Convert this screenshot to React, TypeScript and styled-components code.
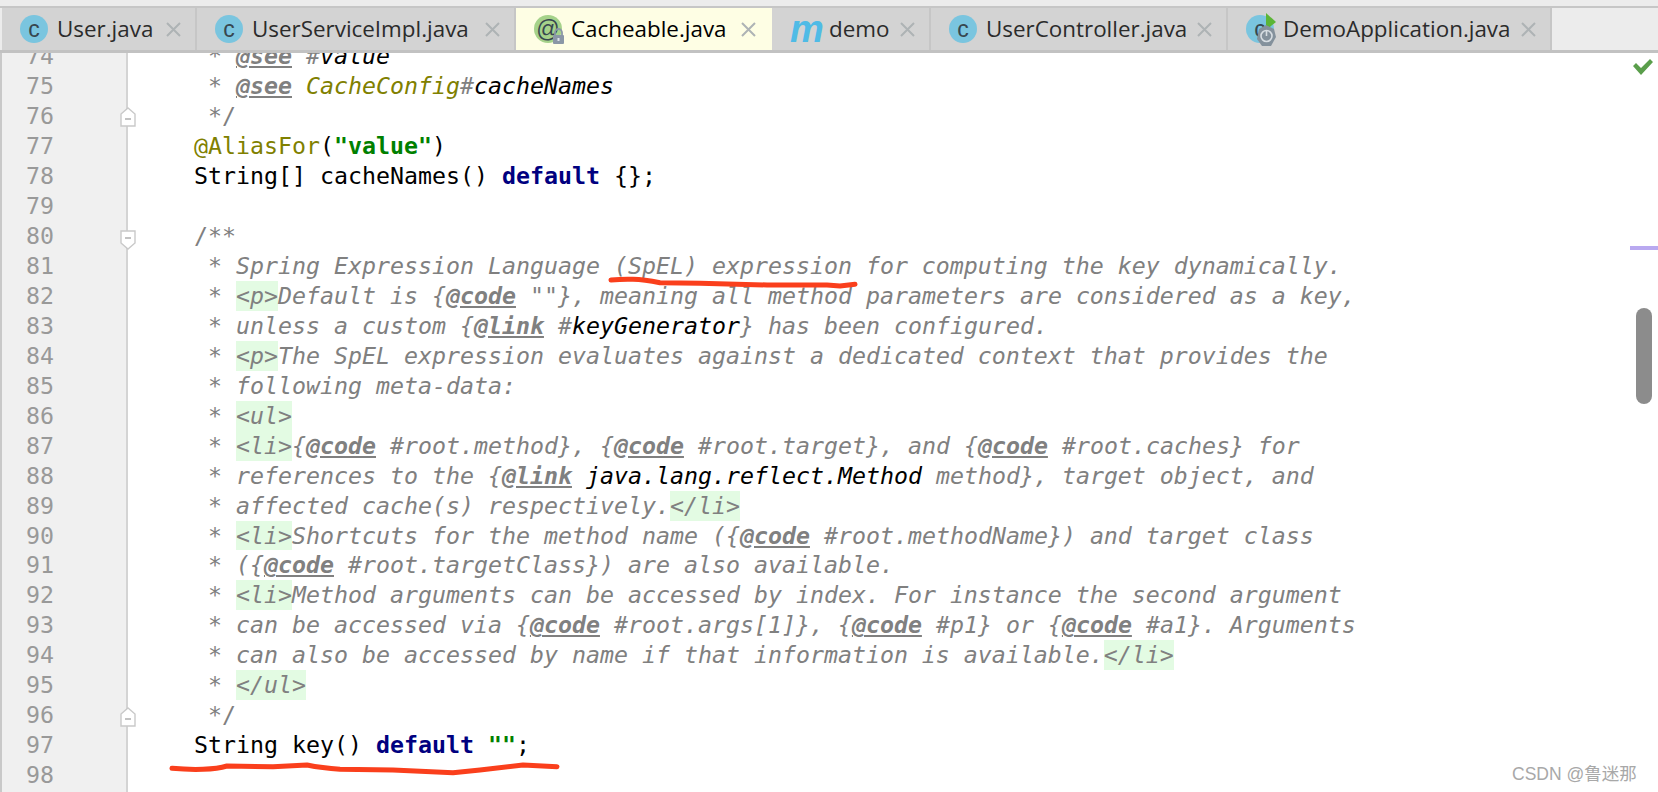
import React from "react";
import styled, { createGlobalStyle } from "styled-components";

const Global = createGlobalStyle`
  html, body { margin: 0; padding: 0; background: #fff; }
  #root { width: 1658px; height: 792px; overflow: hidden; }
`;

const Page = styled.div`
  position: relative;
  width: 1658px;
  height: 792px;
  overflow: hidden;
  display: flex;
  flex-direction: column;
  background: #fff;
`;
const TopStrip = styled.div`
  height: 6px;
  background: #ececec;
  border-bottom: 2px solid #c6c6c6;
  flex: none;
`;
const TabBar = styled.div`
  display: flex;
  height: 42px;
  padding-left: 2px;
  background: #ececec;
  border-bottom: 3px solid #c2c2c2;
  flex: none;
`;
const Tab = styled.div<{ $w: number; $active?: boolean }>`
  width: ${(p) => p.$w}px;
  box-sizing: border-box;
  display: flex;
  align-items: center;
  padding-left: 18px;
  background: ${(p) => (p.$active ? "#fefee4" : "#d3d3d3")};
  border-right: 2px solid ${(p) => (p.$active ? "#fefee4" : "#c6c6c6")};
  font-family: "Open Sans", "Liberation Sans", sans-serif;
  font-size: 22.4px;
  color: ${(p) => (p.$active ? "#000" : "#2b2b2b")};
  flex: none;
`;
const TabName = styled.span`
  margin-left: 9px;
  margin-bottom: 2px;
  white-space: nowrap;
`;
const CloseMark = styled.svg`
  margin-left: auto;
  margin-right: 14px;
  width: 15px;
  height: 15px;
  flex: none;
`;
const IconWrap = styled.span`
  position: relative;
  width: 28px;
  height: 28px;
  flex: none;
  display: block;
`;
const IconDisc = styled.span<{ $bg: string }>`
  display: flex;
  align-items: center;
  justify-content: center;
  width: 28px;
  height: 28px;
  border-radius: 50%;
  background: ${(p) => p.$bg};
  color: #37474f;
  font-family: "Liberation Sans", sans-serif;
  font-size: 23px;
  line-height: 1;
`;
const Badge = styled.svg`
  position: absolute;
  left: 0;
  top: 0;
  width: 32px;
  height: 32px;
  overflow: visible;
`;
const MavenMark = styled.span`
  font-family: "Liberation Sans", sans-serif;
  font-style: italic;
  font-weight: 700;
  font-size: 38px;
  line-height: 28px;
  color: #4fbbe6;
  width: 30px;
  flex: none;
`;

const Editor = styled.div`
  position: relative;
  flex: 1;
  display: flex;
  overflow: hidden;
  min-height: 0;
`;
const Gutter = styled.div`
  position: relative;
  width: 128px;
  box-sizing: border-box;
  flex: none;
  background: #f0f0f0;
  border-left: 2px solid #c9c9c9;
  border-right: 2px solid #d4d4d4;
  padding-left: 24px;
`;
const Nums = styled.div`
  margin-top: -12px;
  color: #999;
`;
const Code = styled.div`
  flex: 1;
  margin-top: -12px;
  padding-left: 10px;
  color: #000;
`;
const mono = `
  font-family: "DejaVu Sans Mono", "Liberation Mono", monospace;
  font-size: 23.25px;
  line-height: 29.97px;
  height: 29.97px;
  white-space: pre;
`;
const NumRow = styled.div`${mono}`;
const Line = styled.div`${mono}`;
const Doc = styled.span`
  color: #808080;
  font-style: italic;
`;
const DocPlain = styled.span`
  color: #808080;
`;
const DocTag = styled.span`
  color: #808080;
  font-weight: 700;
  font-style: italic;
  text-decoration: underline;
`;
const Html = styled.span`
  color: #808080;
  font-style: italic;
  background: #e3fbe3;
  display: inline-block;
  height: 29.97px;
`;
const Ref = styled.span`
  color: #000;
  font-style: italic;
`;
const Olive = styled.span`
  color: #808000;
`;
const OliveItalic = styled(Olive)`
  font-style: italic;
`;
const Kw = styled.span`
  color: #000080;
  font-weight: 700;
`;
const Str = styled.span`
  color: #008000;
  font-weight: 700;
`;
const FoldBox = styled.svg<{ $top: number }>`
  position: absolute;
  left: 118px;
  top: ${(p) => p.$top}px;
  width: 16px;
  height: 20px;
`;
const Check = styled.svg`
  position: absolute;
  right: 4px;
  top: 5px;
  width: 22px;
  height: 18px;
`;
const ErrorStripe = styled.div`
  position: absolute;
  right: 0;
  top: 193px;
  width: 28px;
  height: 4px;
  background: #b9a9f0;
`;
const ScrollThumb = styled.div`
  position: absolute;
  right: 6px;
  top: 255px;
  width: 16px;
  height: 96px;
  border-radius: 8px;
  background: #8c8c8c;
`;
const Ink = styled.svg<{ $l: number; $t: number; $w: number; $h: number }>`
  position: absolute;
  left: ${(p) => p.$l}px;
  top: ${(p) => p.$t}px;
  width: ${(p) => p.$w}px;
  height: ${(p) => p.$h}px;
  overflow: visible;
`;
const Watermark = styled.div`
  position: absolute;
  left: 1512px;
  top: 762px;
  font-family: "Liberation Sans", "Noto Sans CJK SC", sans-serif;
  font-size: 17.5px;
  line-height: 24px;
  color: #a8a8a8;
  white-space: nowrap;
`;

const Close = () => (
  <CloseMark viewBox="0 0 15 15">
    <path d="M1 1 L14 14 M14 1 L1 14" stroke="#aeb3b5" strokeWidth="2" fill="none" />
  </CloseMark>
);

const ClassIcon = () => (
  <IconWrap>
    <IconDisc $bg="#7ac5df">c</IconDisc>
  </IconWrap>
);
const AnnoIcon = () => (
  <IconWrap>
    <IconDisc $bg="#a5d28a">@</IconDisc>
    <Badge viewBox="0 0 32 32">
      <path d="M21 20 v-2.5 a3.5 3.5 0 0 1 7 0 V20" stroke="#8a97a6" strokeWidth="1.8" fill="none" />
      <rect x="19" y="20" width="11" height="9" rx="1" fill="#8a97a6" />
      <rect x="23.5" y="23" width="2" height="3" fill="#dfe4ea" />
    </Badge>
  </IconWrap>
);
const BootIcon = () => (
  <IconWrap>
    <IconDisc $bg="#7ac5df">c</IconDisc>
    <Badge viewBox="0 0 32 32">
      <path d="M20 -2 L30 7 L20 15 Z" fill="#5bb536" />
      <path d="M20 10 L28 14 L30 22 L25 31 L16 31 L11 24 L13 14 Z" fill="#84919c" />
      <circle cx="20.5" cy="21" r="5.5" fill="none" stroke="#d7dde2" strokeWidth="1.6" />
      <path d="M20.5 15 V21" stroke="#d7dde2" strokeWidth="1.6" />
    </Badge>
  </IconWrap>
);

const T = () => <DocPlain>{"     * "}</DocPlain>;

const lines: React.ReactNode[] = [
  <><T /><DocTag>@see</DocTag><Doc> #</Doc><Ref>value</Ref></>,
  <><T /><DocTag>@see</DocTag><Doc> </Doc><OliveItalic>CacheConfig</OliveItalic><Doc>#</Doc><Ref>cacheNames</Ref></>,
  <DocPlain>{"     */"}</DocPlain>,
  <>{"    "}<Olive>@AliasFor</Olive>(<Str>"value"</Str>)</>,
  <>{"    String[] cacheNames() "}<Kw>default</Kw>{" {};"}</>,
  <></>,
  <DocPlain>{"    /**"}</DocPlain>,
  <><T /><Doc>Spring Expression Language (SpEL) expression for computing the key dynamically.</Doc></>,
  <><T /><Html>{"<p>"}</Html><Doc>{"Default is {"}</Doc><DocTag>@code</DocTag><Doc>{' ""}, meaning all method parameters are considered as a key,'}</Doc></>,
  <><T /><Doc>{"unless a custom {"}</Doc><DocTag>@link</DocTag><Doc> #</Doc><Ref>keyGenerator</Ref><Doc>{"} has been configured."}</Doc></>,
  <><T /><Html>{"<p>"}</Html><Doc>The SpEL expression evaluates against a dedicated context that provides the</Doc></>,
  <><T /><Doc>following meta-data:</Doc></>,
  <><T /><Html>{"<ul>"}</Html></>,
  <><T /><Html>{"<li>"}</Html><Doc>{"{"}</Doc><DocTag>@code</DocTag><Doc>{" #root.method}, {"}</Doc><DocTag>@code</DocTag><Doc>{" #root.target}, and {"}</Doc><DocTag>@code</DocTag><Doc>{" #root.caches} for"}</Doc></>,
  <><T /><Doc>{"references to the {"}</Doc><DocTag>@link</DocTag><Doc> </Doc><Ref>java.lang.reflect.Method</Ref><Doc>{" method}, target object, and"}</Doc></>,
  <><T /><Doc>affected cache(s) respectively.</Doc><Html>{"</li>"}</Html></>,
  <><T /><Html>{"<li>"}</Html><Doc>{"Shortcuts for the method name ({"}</Doc><DocTag>@code</DocTag><Doc>{" #root.methodName}) and target class"}</Doc></>,
  <><T /><Doc>{"({"}</Doc><DocTag>@code</DocTag><Doc>{" #root.targetClass}) are also available."}</Doc></>,
  <><T /><Html>{"<li>"}</Html><Doc>Method arguments can be accessed by index. For instance the second argument</Doc></>,
  <><T /><Doc>{"can be accessed via {"}</Doc><DocTag>@code</DocTag><Doc>{" #root.args[1]}, {"}</Doc><DocTag>@code</DocTag><Doc>{" #p1} or {"}</Doc><DocTag>@code</DocTag><Doc>{" #a1}. Arguments"}</Doc></>,
  <><T /><Doc>can also be accessed by name if that information is available.</Doc><Html>{"</li>"}</Html></>,
  <><T /><Html>{"</ul>"}</Html></>,
  <DocPlain>{"     */"}</DocPlain>,
  <>{"    String key() "}<Kw>default</Kw>{" "}<Str>""</Str>;</>,
  <></>,
];

const Fold = ({ top, down }: { top: number; down?: boolean }) => (
  <FoldBox $top={top} viewBox="0 0 16 20">
    {down ? (
      <path d="M1 1 H15 V13 L8 19 L1 13 Z" fill="#fff" stroke="#c9c9c9" strokeWidth="1.4" />
    ) : (
      <path d="M1 19 H15 V7 L8 1 L1 7 Z" fill="#fff" stroke="#c9c9c9" strokeWidth="1.4" />
    )}
    <path d={down ? "M5 8 H11" : "M5 12 H11"} stroke="#a8a8a8" strokeWidth="1.4" />
  </FoldBox>
);

export default function App() {
  return (
    <Page>
      <Global />
      <TopStrip />
      <TabBar>
        <Tab $w={195}><ClassIcon /><TabName>User.java</TabName><Close /></Tab>
        <Tab $w={319}><ClassIcon /><TabName>UserServiceImpl.java</TabName><Close /></Tab>
        <Tab $w={256} $active><AnnoIcon /><TabName>Cacheable.java</TabName><Close /></Tab>
        <Tab $w={159}><MavenMark>m</MavenMark><TabName>demo</TabName><Close /></Tab>
        <Tab $w={297}><ClassIcon /><TabName>UserController.java</TabName><Close /></Tab>
        <Tab $w={324}><BootIcon /><TabName>DemoApplication.java</TabName><Close /></Tab>
      </TabBar>
      <Editor>
        <Gutter>
          <Nums>
            {lines.map((_, i) => (
              <NumRow key={i}>{74 + i}</NumRow>
            ))}
          </Nums>
          <Fold top={54} />
          <Fold top={177} down />
          <Fold top={654} />
        </Gutter>
        <Code>
          {lines.map((l, i) => (
            <Line key={i}>{l}</Line>
          ))}
        </Code>
        <Check viewBox="0 0 22 18">
          <path d="M1 8 L9 17 L21 4 L18 1 L9 10 L4 5 Z" fill="#5a9e4b" />
        </Check>
        <ErrorStripe />
        <ScrollThumb />
        <Ink $l={611} $t={224} $w={244} $h={10} viewBox="0 0 244 10">
          <path d="M0 3 Q11 2 22 2.3 T49 5.7 L89 6.3 L156 8 L216 8 L229 9 L244 7.3" stroke="#fa3f1c" strokeWidth="5" fill="none" strokeLinecap="round" strokeLinejoin="round" />
        </Ink>
        <Ink $l={172} $t={710} $w={386} $h={12} viewBox="0 0 386 12">
          <path d="M0 5.3 Q16 6.8 31 6.3 T55 3 L101 3.7 L135 2 Q150 5 168 6.3 L221 7 L281 9.7 L308 7 L351 2 L385 3.7" stroke="#fa3f1c" strokeWidth="5" fill="none" strokeLinecap="round" strokeLinejoin="round" />
        </Ink>
      </Editor>
      <Watermark>CSDN @鲁迷那</Watermark>
    </Page>
  );
}
